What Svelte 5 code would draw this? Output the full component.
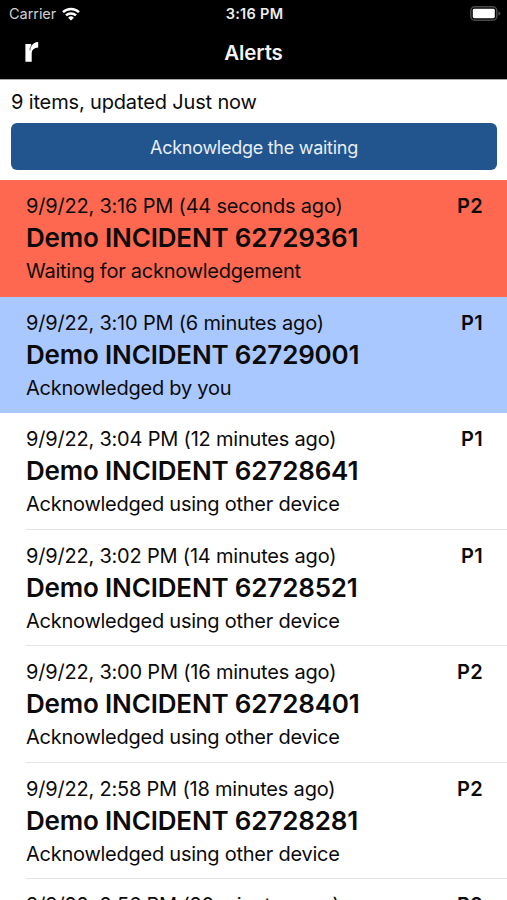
<script>
  const alerts = [
    { id: 62729361, time: "3:16", ago: "44 seconds", priority: "P2", status: "waiting" },
    { id: 62729001, time: "3:10", ago: "6 minutes", priority: "P1", status: "mine" },
    { id: 62728641, time: "3:04", ago: "12 minutes", priority: "P1", status: "other" },
    { id: 62728521, time: "3:02", ago: "14 minutes", priority: "P1", status: "other" },
    { id: 62728401, time: "3:00", ago: "16 minutes", priority: "P2", status: "other" },
    { id: 62728281, time: "2:58", ago: "18 minutes", priority: "P2", status: "other" },
    { id: 62728161, time: "2:56", ago: "20 minutes", priority: "P2", status: "other" }
  ];

  const statusText = {
    waiting: "Waiting for acknowledgement",
    mine: "Acknowledged by you",
    other: "Acknowledged using other device"
  };
</script>

<div class="App">
  <header>
    <div class="Status">
      <div class="Status-carrier">
        <span>Carrier</span>
        <svg width="18" height="14" viewBox="0 0 18 14" fill="none" stroke="#fff" stroke-width="2.5">
          <path d="M1 5.2a11.5 11.5 0 0 1 16 0" />
          <path d="M4 8.4a7.2 7.2 0 0 1 10 0" />
          <path d="M9 13.6 6.1 10.7a4.2 4.2 0 0 1 5.8 0z" fill="#fff" stroke="none" />
        </svg>
      </div>
      <span class="Status-time">3:16 PM</span>
      <svg class="Status-battery" width="31" height="15" viewBox="0 0 31 15">
        <rect x="0.8" y="0.8" width="26" height="13.4" rx="4" fill="none" stroke="#4a4a4c" stroke-width="1.5" />
        <rect x="2.8" y="2.8" width="22" height="9.4" rx="1.4" fill="#fff" />
        <path d="M28.4 5.2q2 .7 2 2.3t-2 2.3z" fill="#4a4a4c" />
      </svg>
    </div>
    <div class="Nav">
      <svg class="Nav-logo" width="14" height="21" viewBox="0 0 14 21">
        <path d="M.4 2h5.8v2.2Q8.4.2 13.2 0v5.6Q6.9 6.2 6.7 11v8.8H.4z" fill="#fff" />
        <path d="M6.4 3.4Q5 5.6 4.8 8.4" fill="none" stroke="#000" stroke-width=".6" />
      </svg>
      <h1>Alerts</h1>
    </div>
  </header>

  <section class="Summary">
    <p>9 items, updated Just now</p>
    <button>Acknowledge the waiting</button>
  </section>

  <ul class="Alerts">
    {#each alerts as alert (alert.id)}
      <li class="Alert {alert.status}">
        <div class="Alert-content">
          <div class="Alert-top">
            <span class="Alert-date">9/9/22, {alert.time} PM ({alert.ago} ago)</span>
            <span class="Alert-priority">{alert.priority}</span>
          </div>
          <h2>Demo INCIDENT {alert.id}</h2>
          <p>{statusText[alert.status]}</p>
        </div>
      </li>
    {/each}
  </ul>
</div>

<style>
  :global(body) {
    background: #fff;
    overflow: hidden;
  }
  .App {
    height: 900px;
    overflow: hidden;
    color: #0b0b0b;
    font-family: Inter, "Liberation Sans", sans-serif;
  }
  h1,
  h2,
  p,
  ul {
    margin: 0;
    padding: 0;
  }
  svg {
    display: block;
  }
  header {
    height: 80px;
    box-sizing: border-box;
    border-bottom: 1px solid #a8a8a8;
    background: #000;
    color: #fff;
  }
  .Status {
    display: grid;
    grid-template-columns: 1fr auto 1fr;
    align-items: center;
    height: 27px;
    padding: 0 6px 0 9px;
  }
  .Status-carrier {
    display: flex;
    align-items: center;
    gap: 6px;
    color: #d0d0d0;
    font-size: 14.5px;
    letter-spacing: -0.05px;
  }
  .Status-time {
    margin-right: 1px;
    font-size: 14.5px;
    font-weight: 600;
    letter-spacing: 0.3px;
    color: #eee;
  }
  .Status-battery {
    justify-self: end;
  }
  .Nav {
    display: grid;
    grid-template-columns: 1fr auto 1fr;
    align-items: center;
    height: 51px;
    padding: 0 25px;
  }
  .Nav h1 {
    font-size: 20.5px;
    font-weight: 600;
    line-height: 24px;
    letter-spacing: -0.15px;
    color: #f4f4f4;
  }
  .Summary {
    height: 100px;
    box-sizing: border-box;
    padding: 10px 10px 0 11px;
  }
  .Summary p {
    font-size: 20px;
    line-height: 25px;
    letter-spacing: -0.15px;
  }
  .Summary button {
    display: block;
    width: 100%;
    height: 47px;
    margin-top: 8px;
    padding: 0;
    border: 0;
    border-radius: 6px;
    background: #22558e;
    color: #e8eef5;
    font-family: inherit;
    font-size: 18px;
    line-height: 49px;
    letter-spacing: -0.27px;
  }
  .Alerts {
    list-style: none;
  }
  .Alert {
    height: 116.5px;
    box-sizing: border-box;
    padding-left: 26px;
  }
  .Alert-content {
    height: 100%;
    box-sizing: border-box;
    padding: 13px 24px 0 0;
    border-bottom: 1px solid #e4e4e4;
  }
  .waiting {
    background: #ff6850;
  }
  .mine {
    background: #a9c8ff;
  }
  .waiting .Alert-content,
  .mine .Alert-content {
    border-color: transparent;
  }
  .Alert-top {
    display: flex;
    justify-content: space-between;
    font-size: 20px;
    line-height: 26px;
  }
  .Alert-date {
    letter-spacing: -0.2px;
  }
  .Alert-priority {
    font-weight: 600;
    letter-spacing: 0.3px;
  }
  .Alert h2 {
    font-size: 26px;
    font-weight: 600;
    line-height: 38px;
    letter-spacing: -0.17px;
    white-space: nowrap;
  }
  .Alert p {
    font-size: 20px;
    line-height: 28px;
    letter-spacing: -0.25px;
  }
</style>
